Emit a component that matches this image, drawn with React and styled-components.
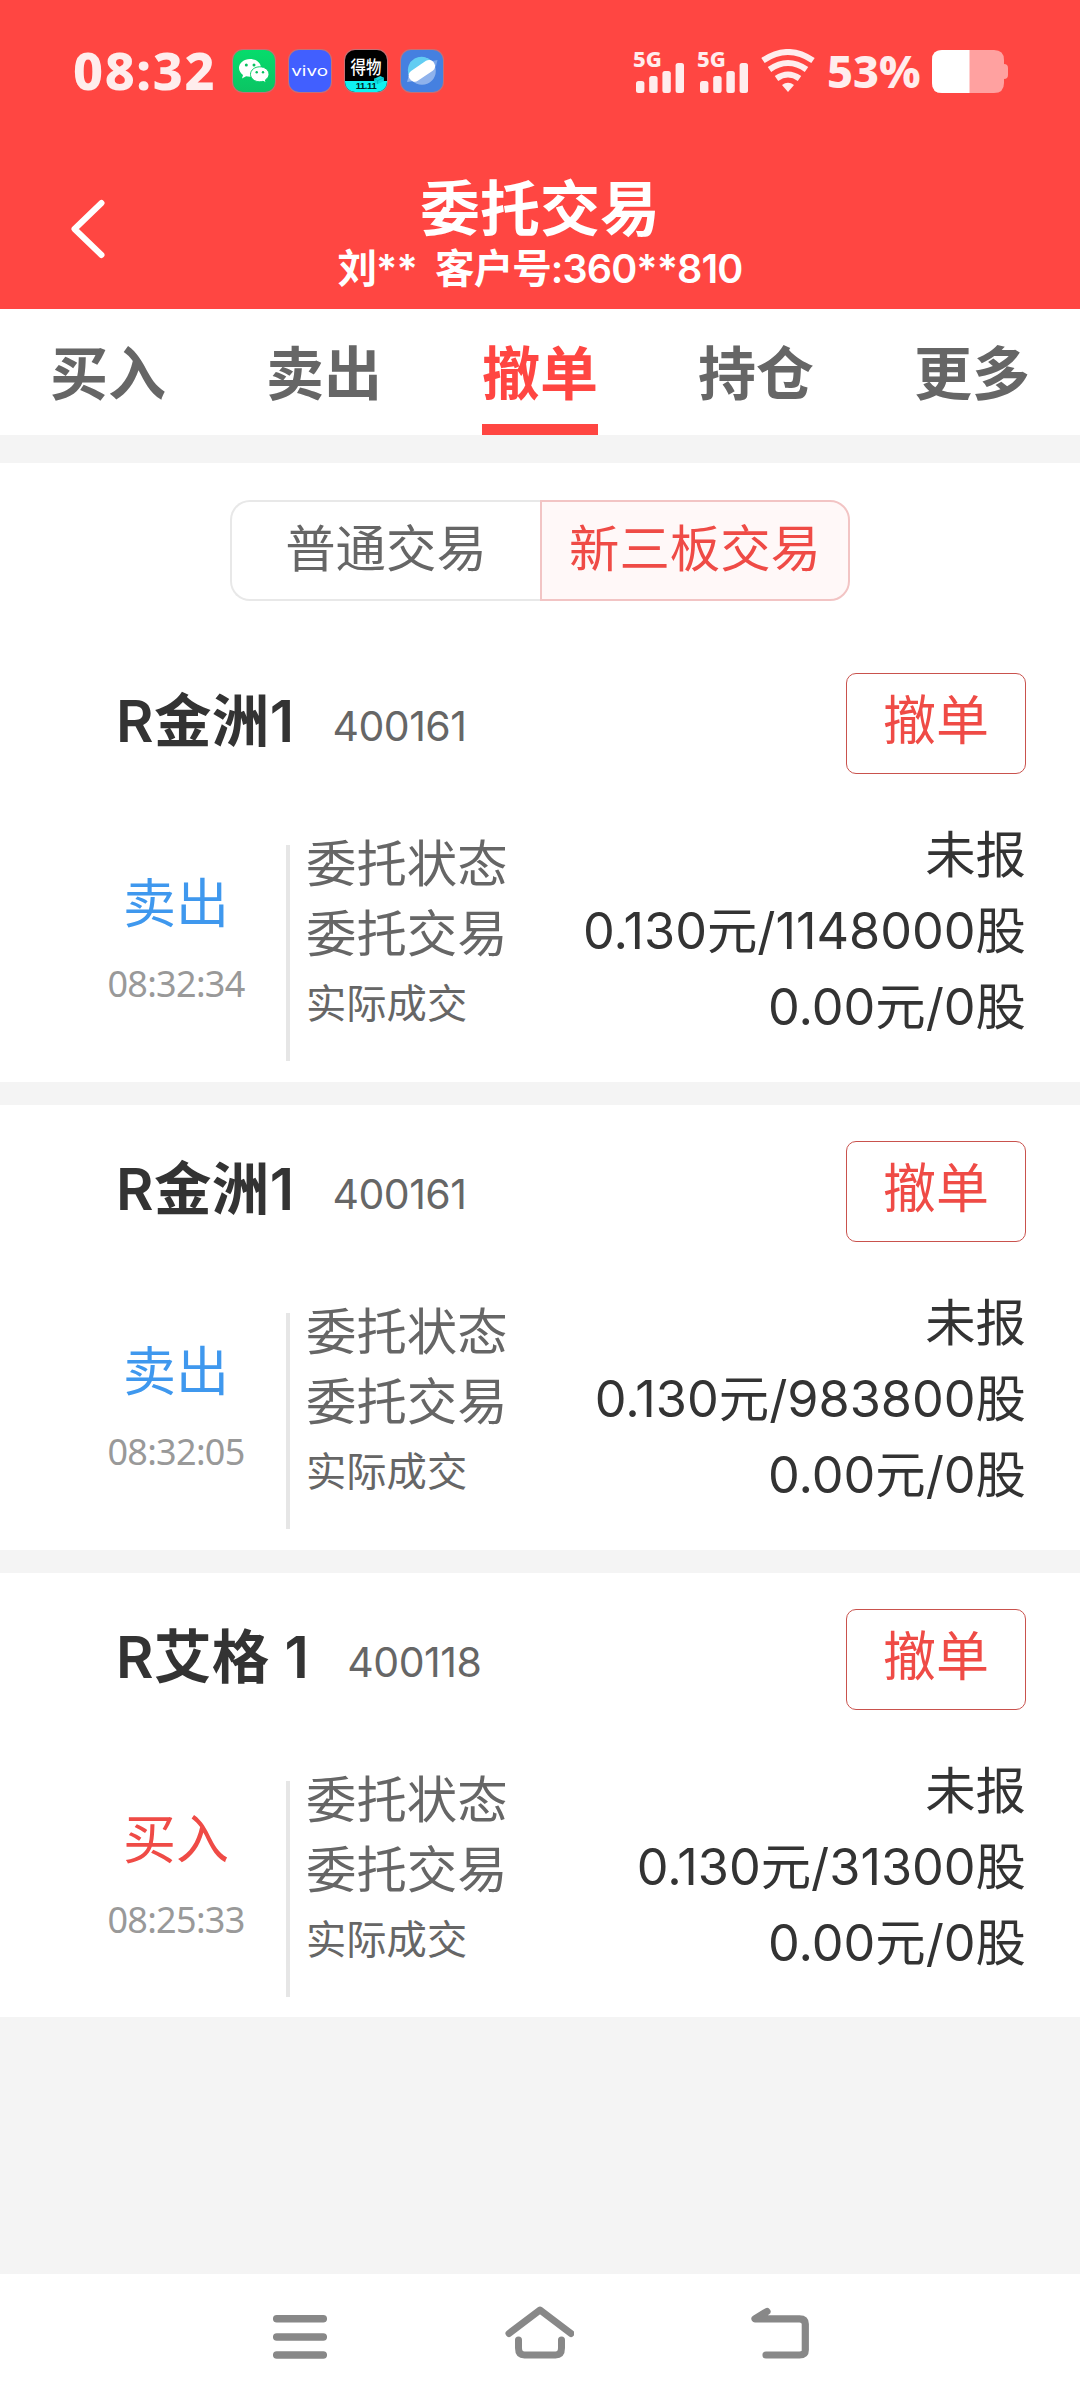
import React, { useState } from 'react';
import styled, { createGlobalStyle } from 'styled-components';

const tabs = ['买入', '卖出', '撤单', '持仓', '更多'];
const markets = ['普通交易', '新三板交易'];

const orders = [
  { id: 1, name: 'R金洲1', code: '400161', side: '卖出', time: '08:32:34', status: '未报', entrusted: '0.130元/1148000股', filled: '0.00元/0股' },
  { id: 2, name: 'R金洲1', code: '400161', side: '卖出', time: '08:32:05', status: '未报', entrusted: '0.130元/983800股', filled: '0.00元/0股' },
  { id: 3, name: 'R艾格 1', code: '400118', side: '买入', time: '08:25:33', status: '未报', entrusted: '0.130元/31300股', filled: '0.00元/0股' },
];

function Signal() {
  return (
    <SignalStyled>
      <span>5G</span>
      <svg width="48" height="30" viewBox="0 0 48 30" fill="#ffeded">
        <rect x="0" y="18" width="8.4" height="12" rx="2.5" />
        <rect x="13.2" y="13" width="8.4" height="17" rx="2.5" />
        <rect x="26.4" y="8" width="8.4" height="22" rx="2.5" />
        <rect x="39.6" y="0" width="8.4" height="30" rx="2.5" />
      </svg>
    </SignalStyled>
  )
}

function StatusBar() {
  return (
    <StatusStyled>
      <Clock>08:32</Clock>
      <AppIcons>
        <AppIcon $bg="linear-gradient(#06dc6c, #0bc463)">
          <svg width="42" height="42" viewBox="0 0 42 42">
            <path d="M17 9C10.900 9 6 13 6 18c0 2.800 1.600 5.200 4 6.900L9 28.500l4.100-2.200c1.300.3 2.600.500 3.900.500 6.100 0 11-4 11-8.900S23.100 9 17 9Z" fill="#fff" />
            <circle cx="13.300" cy="15" r="1.500" fill="#07c160" />
            <circle cx="21" cy="15" r="1.500" fill="#07c160" />
            <path d="M26.800 16.800c-5.200 0-9.300 3.300-9.300 7.500s4.100 7.500 9.300 7.500c1.100 0 2.200-.2 3.200-.5l3.100 1.500-.7-2.900c2.200-1.400 3.600-3.400 3.600-5.600 0-4.200-4.100-7.500-9.200-7.500Z" fill="#fff" stroke="#0ace67" strokeWidth="1" />
            <circle cx="23.700" cy="22.200" r="1.200" fill="#07c160" />
            <circle cx="30" cy="22.200" r="1.200" fill="#07c160" />
          </svg>
        </AppIcon>
        <AppIcon $bg="#415fff">
          <VivoText>vivo</VivoText>
        </AppIcon>
        <AppIcon $bg="#000">
          <Dewu>
            <b>得物</b>
            <i>11.11</i>
            <Cube width="10" height="8" viewBox="0 0 11 9">
              <path d="M0 3L7 0L11 2V6L4 9L0 7Z" fill="#0fd6dc" />
              <path d="M0 3L4 5L11 2M4 5V9" fill="none" stroke="#06a9b4" strokeWidth="0.8" />
            </Cube>
          </Dewu>
        </AppIcon>
        <AppIcon $bg="#4580e0">
          <svg width="42" height="42" viewBox="0 0 42 42">
            <circle cx="21" cy="21" r="13.800" fill="#8fb2ec" />
            <path d="M7.500 25A13.800 13.800 0 0 1 31 11.500Z" fill="#62cdf2" />
            <path d="M29 11.500L36.500 10L35 16L31 21Z" fill="#7aa6ea" />
            <path d="M6 32L8 25L13 31Z" fill="#8fb2ec" />
            <rect x="6.500" y="14.800" width="29" height="12" rx="5.500" transform="rotate(-34 21 21)" fill="#fff" />
          </svg>
        </AppIcon>
      </AppIcons>
      <StatusRight>
        <Signal />
        <Signal />
        <svg width="54" height="44" viewBox="0 0 54 44" fill="none" stroke="#ffeded" strokeWidth="6">
          <path d="M2 11.500Q27-5.500 52 11.500" />
          <path d="M8.500 20.500Q27 7.500 45.500 20.500" />
          <path d="M15.500 29.500Q27 21.500 38.500 29.500" />
          <path d="M21 36Q27 31.500 33 36L27 43Z" fill="#ffeded" stroke="none" />
        </svg>
        <Percent>53%</Percent>
        <svg width="77" height="43" viewBox="0 0 77 43">
          <path d="M10 0H62Q72 0 72 10V14Q76 14 76 18V25Q76 29 72 29V33Q72 43 62 43H10Q0 43 0 33V10Q0 0 10 0Z" fill="#ffa1a0" />
          <path d="M10 0H37.500V43H10Q0 43 0 33V10Q0 0 10 0Z" fill="#fff" />
        </svg>
      </StatusRight>
    </StatusStyled>
  )
}

function OrderCard({ order }) {
  return (
    <CardStyled>
      <CardHead>
        <StockName>{order.name}</StockName>
        <StockCode>{order.code}</StockCode>
        <CancelButton>撤单</CancelButton>
      </CardHead>
      <CardBody>
        <SideCol>
          <Side $buy={order.side === '买入'}>{order.side}</Side>
          <Time>{order.time}</Time>
        </SideCol>
        <Labels>
          <span>委托状态</span>
          <span>委托交易</span>
          <small>实际成交</small>
        </Labels>
        <Values>
          <span>{order.status}</span>
          <span>{order.entrusted}</span>
          <span>{order.filled}</span>
        </Values>
      </CardBody>
    </CardStyled>
  )
}

export default function App() {
  const [activeTab, setActiveTab] = useState('撤单');
  const [market, setMarket] = useState('新三板交易');

  return (
    <AppStyled>
      <GlobalStyle />
      <TopStyled>
        <StatusBar />
        <TitleBar>
          <BackIcon width="36" height="60" viewBox="0 0 36 60">
            <path d="M31.500 4L4.500 30L31.500 56" fill="none" stroke="#fff" strokeWidth="6" strokeLinecap="round" strokeLinejoin="round" />
          </BackIcon>
          <Titles>
            <h1>委托交易</h1>
            <p>刘**&nbsp; 客户号:360**810</p>
          </Titles>
        </TitleBar>
      </TopStyled>
      <TabsStyled>
        {tabs.map((tab) => (
          <Tab key={tab} $active={tab === activeTab} onClick={() => setActiveTab(tab)}>
            <span>{tab}</span>
          </Tab>
        ))}
      </TabsStyled>
      <Content>
        <SwitchRow>
          {markets.map((item) => (
            <SwitchItem key={item} $active={item === market} onClick={() => setMarket(item)}>{item}</SwitchItem>
          ))}
        </SwitchRow>
        <OrderList>
          {orders.map((order) => <OrderCard key={order.id} order={order} />)}
        </OrderList>
      </Content>
      <NavStyled>
        <svg width="54" height="54" viewBox="0 0 54 54" stroke="#888" strokeWidth="7.500" strokeLinecap="round">
          <path d="M3.700 13.800H50.300M3.700 32H50.300M3.700 50H50.300" />
        </svg>
        <svg width="70" height="54" viewBox="-1 0 70 54" fill="none" stroke="#888" strokeWidth="7" strokeLinecap="round" strokeLinejoin="round">
          <path d="M4 28.500L35 5L66 28.500" />
          <path d="M13.500 35V43Q13.500 50 19.500 50H50.500Q56.500 50 56.500 43V35" />
        </svg>
        <svg width="58" height="54" viewBox="0 0 58 54" fill="none" stroke="#888" strokeWidth="7.200" strokeLinecap="round" strokeLinejoin="round">
          <path d="M16 6.500L4 13.800H48.500Q54.300 13.800 54.300 19V45Q54.300 50 48.500 50H15" />
        </svg>
      </NavStyled>
    </AppStyled>
  )
}

const GlobalStyle = createGlobalStyle`
  * {
    margin: 0;
    padding: 0;
    box-sizing: border-box;
  }

  body {
    background: #f4f4f4;
    font-family: Inter, 'Noto Sans CJK SC', sans-serif;
    color: #333;
  }

  button {
    font-family: inherit;
    background: none;
    border: none;
  }

  svg {
    display: block;
    flex-shrink: 0;
  }
`;

const AppStyled = styled.div`
  display: flex;
  flex-direction: column;
  width: 1080px;
  height: 2400px;
  overflow: hidden;
`;

const TopStyled = styled.header`
  height: 309px;
  background: #ff4642;
  color: #fff;
`;

const StatusStyled = styled.div`
  display: flex;
  align-items: center;
  height: 142px;
  padding: 0 71px 0 73px;
  color: #ffeded;
  font-family: 'Noto Sans', sans-serif;
  font-weight: 800;
`;

const Clock = styled.span`
  width: 160px;
  padding-bottom: 3px;
  font-size: 52px;
  line-height: 60px;
  letter-spacing: 1.6px;
  white-space: nowrap;
`;

const AppIcons = styled.div`
  display: flex;
  gap: 14px;
`;

const AppIcon = styled.div`
  display: flex;
  align-items: center;
  justify-content: center;
  width: 42px;
  height: 42px;
  border-radius: 10px;
  overflow: hidden;
  background: ${({ $bg }) => $bg};
  box-shadow: 0 0 0 1px rgba(160, 140, 150, 0.6);
`;

const VivoText = styled.span`
  color: #fff;
  font-family: Inter, sans-serif;
  font-size: 14px;
  font-weight: 400;
  line-height: 14px;
  transform: scaleX(1.35);
`;

const Dewu = styled.div`
  position: relative;
  display: flex;
  flex-direction: column;
  width: 42px;
  height: 42px;
  text-align: center;

  b {
    height: 31px;
    color: #fff;
    font-family: 'Noto Sans CJK SC', sans-serif;
    font-size: 15.500px;
    font-weight: 500;
    line-height: 32px;
    transform: scaleY(1.15);
  }

  i {
    height: 11px;
    background: #0ff2f2;
    color: #022;
    font-family: 'Liberation Sans', sans-serif;
    font-size: 9.500px;
    font-style: normal;
    font-weight: 700;
    line-height: 9px;
    letter-spacing: -0.4px;
  }
`;

const Cube = styled.svg`
  position: absolute;
  right: 3px;
  bottom: 8px;
`;

const StatusRight = styled.div`
  display: flex;
  align-items: center;
  margin-left: auto;
`;

const SignalStyled = styled.div`
  display: flex;
  flex-direction: column;
  width: 64px;
  height: 43px;
  padding-left: 3px;

  span {
    height: 13px;
    margin-left: -3px;
    font-size: 22px;
    font-weight: 800;
    line-height: 16px;
  }

  svg {
    height: 30px;
  }
`;

const Percent = styled.span`
  width: 105px;
  margin-left: 12px;
  font-size: 45px;
  font-weight: 800;
  line-height: 50px;
`;

const TitleBar = styled.div`
  display: grid;
  grid-template-columns: 70px 1fr 70px;
  padding: 35px 70px 0;
`;

const BackIcon = styled.svg`
  margin-top: 22px;
`;

const Titles = styled.div`
  text-align: center;

  h1 {
    font-size: 60px;
    font-weight: 700;
    line-height: 64px;
  }

  p {
    font-size: 39.500px;
    font-weight: 600;
    line-height: 56px;
    letter-spacing: -0.9px;
    white-space: nowrap;
  }
`;

const TabsStyled = styled.nav`
  display: grid;
  grid-template-columns: repeat(5, 1fr);
  height: 126px;
  background: #fff;
`;

const Tab = styled.button`
  display: flex;
  justify-content: center;

  span {
    height: 126px;
    border-bottom: 11px solid ${({ $active }) => ($active ? '#ff4642' : 'transparent')};
    color: ${({ $active }) => ($active ? '#ff4642' : '#666')};
    font-size: 58px;
    font-weight: 700;
    line-height: 131px;
  }
`;

const Content = styled.main`
  flex: 1;
  padding-top: 28px;
`;

const SwitchRow = styled.div`
  display: flex;
  justify-content: center;
  padding: 37px 0;
  background: #fff;
`;

const SwitchItem = styled.button`
  width: 310px;
  height: 101px;
  padding-bottom: 4px;
  border: 2px solid ${({ $active }) => ($active ? '#f2c4c4' : '#e8e8e8')};
  background: ${({ $active }) => ($active ? '#fff8f8' : '#fff')};
  color: ${({ $active }) => ($active ? '#ef4b46' : '#666')};
  font-size: 50.400px;
  line-height: 92px;

  &:first-child {
    border-right: none;
    border-radius: 20px 0 0 20px;
  }

  &:last-child {
    border-radius: 0 20px 20px 0;
  }
`;

const OrderList = styled.div`
  display: flex;
  flex-direction: column;
  gap: 23px;
`;

const CardStyled = styled.section`
  height: 445px;
  padding: 36px 54px 0 0;
  margin-top: -1px;
  background: #fff;

  & + & {
    margin-top: 0;
  }

  &:last-child {
    height: 444px;
  }
`;

const CardHead = styled.div`
  display: flex;
  height: 101px;
  padding-left: 116px;
`;

const StockName = styled.h2`
  font-size: 57.500px;
  font-weight: 600;
  line-height: 97px;
  letter-spacing: 0.4px;
  white-space: nowrap;
`;

const StockCode = styled.span`
  margin-left: 38px;
  color: #666;
  font-size: 41px;
  line-height: 106px;
  letter-spacing: -0.5px;
`;

const CancelButton = styled.button`
  width: 180px;
  height: 101px;
  margin-left: auto;
  padding-bottom: 5px;
  border: 1px solid #c9524d;
  border-radius: 10px;
  color: #ef4b46;
  font-size: 53px;
  line-height: 90px;
`;

const CardBody = styled.div`
  display: flex;
  padding-top: 41px;
`;

const SideCol = styled.div`
  width: 290px;
  height: 216px;
  margin-top: 30px;
  padding: 28px 0 0 66px;
  border-right: 4px solid #e6e6e6;
  text-align: center;
`;

const Side = styled.div`
  width: 220px;
  color: ${({ $buy }) => ($buy ? '#ef4b46' : '#3f98ee')};
  font-size: 53px;
  line-height: 62px;
`;

const Time = styled.div`
  width: 220px;
  margin-top: 24px;
  color: #999;
  font-family: 'Noto Sans', sans-serif;
  font-size: 36px;
  line-height: 50px;
  letter-spacing: -0.7px;
`;

const Labels = styled.div`
  display: flex;
  flex-direction: column;
  padding: 14px 0 0 16px;
  color: #666;

  span {
    font-size: 50.400px;
    line-height: 70px;
  }

  small {
    font-size: 40.300px;
    line-height: 70px;
  }
`;

const Values = styled.div`
  flex: 1;
  padding-top: 2px;
  text-align: right;
  font-size: 50.400px;

  span {
    display: block;
    line-height: 76px;
    white-space: nowrap;
  }
`;

const NavStyled = styled.footer`
  display: flex;
  justify-content: space-between;
  height: 126px;
  padding: 31px 271px 0 273px;
  background: #fff;
`;
